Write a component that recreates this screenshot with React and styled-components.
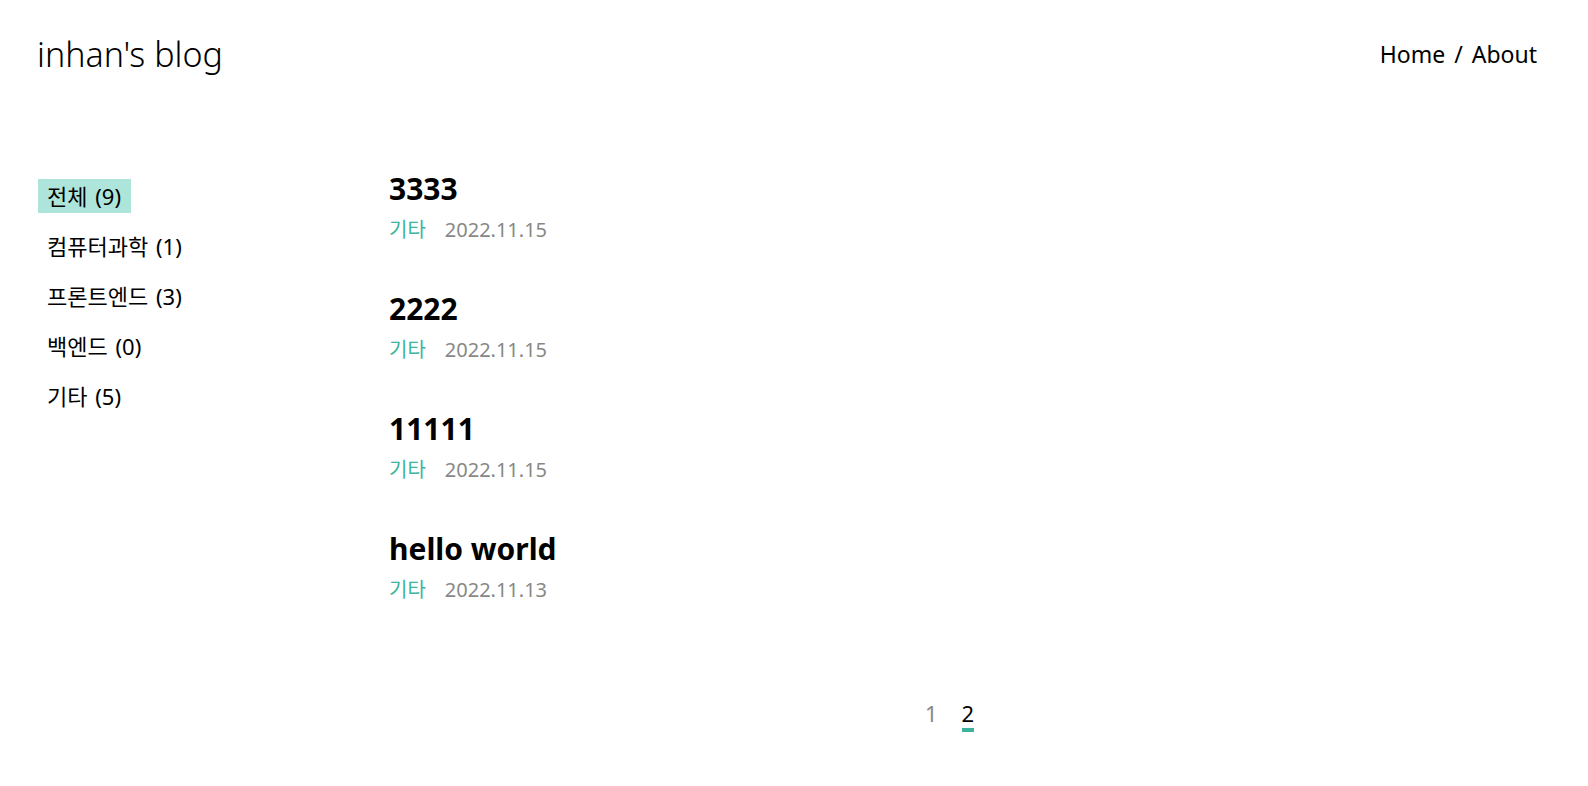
import React from 'react'
import styled, { createGlobalStyle } from 'styled-components'

const GlobalStyle = createGlobalStyle`
  body {
    margin: 0;
    background: #fff;
    color: #000;
    font-family: "Noto Sans", "Noto Sans CJK KR", sans-serif;
  }
  a {
    color: inherit;
    text-decoration: none;
  }
`

const Header = styled.header`
  display: flex;
  justify-content: space-between;
  align-items: center;
  padding: 29px 51px 0 37px;
`

const Logo = styled.a`
  font-size: 34px;
  font-weight: 300;
  line-height: 50px;
`

const Nav = styled.nav`
  display: flex;
  gap: 9px;
  font-size: 23px;
`

const Layout = styled.div`
  display: flex;
  padding: 88px 51px 0 38px;
`

const Sidebar = styled.ul`
  list-style: none;
  margin: 0;
  padding: 12px 0 0;
  width: 351px;
  flex-shrink: 0;
  display: flex;
  flex-direction: column;
  gap: 16px;
`

const Category = styled.li`
  align-self: flex-start;
  padding: 0 10px 0 9px;
  height: 34px;
  line-height: 34px;
  font-size: 22px;
  word-spacing: 2px;
  background: ${p => (p.active ? '#ade5da' : 'transparent')};
`

const Main = styled.main`
  flex: 1;
  padding-top: 2px;
`

const Post = styled.article`
  & + & {
    margin-top: 38px;
  }
`

const Title = styled.h2`
  margin: 0;
  font-size: 30px;
  font-weight: 700;
  line-height: 40px;
`

const Meta = styled.div`
  display: flex;
  gap: 19px;
  font-size: 20px;
  line-height: 42px;
`

const Tag = styled.span`
  color: #3cb4a0;
`

const Date = styled.span`
  color: #888;
`

const Pagination = styled.div`
  display: flex;
  justify-content: center;
  gap: 24px;
  margin-top: 89px;
  padding-right: 27px;
  font-size: 22px;
`

const Page = styled.a`
  padding-bottom: 2px;
  line-height: 26px;
  color: ${p => (p.active ? '#000' : '#888')};
  border-bottom: 4px solid ${p => (p.active ? '#3cb39a' : 'transparent')};
`

const categories = [
  { name: '전체', count: 9, active: true },
  { name: '컴퓨터과학', count: 1 },
  { name: '프론트엔드', count: 3 },
  { name: '백엔드', count: 0 },
  { name: '기타', count: 5 },
]

const posts = [
  { title: '3333', tag: '기타', date: '2022.11.15' },
  { title: '2222', tag: '기타', date: '2022.11.15' },
  { title: '11111', tag: '기타', date: '2022.11.15' },
  { title: 'hello world', tag: '기타', date: '2022.11.13' },
]

export default function App() {
  return (
    <>
      <GlobalStyle />
      <Header>
        <Logo href="#">inhan's blog</Logo>
        <Nav>
          <a href="#">Home</a>
          <span>/</span>
          <a href="#">About</a>
        </Nav>
      </Header>
      <Layout>
        <Sidebar>
          {categories.map(c => (
            <Category key={c.name} active={c.active}>
              {c.name} ({c.count})
            </Category>
          ))}
        </Sidebar>
        <Main>
          {posts.map(p => (
            <Post key={p.title}>
              <Title>{p.title}</Title>
              <Meta>
                <Tag>{p.tag}</Tag>
                <Date>{p.date}</Date>
              </Meta>
            </Post>
          ))}
          <Pagination>
            <Page href="#">1</Page>
            <Page href="#" active>2</Page>
          </Pagination>
        </Main>
      </Layout>
    </>
  )
}
